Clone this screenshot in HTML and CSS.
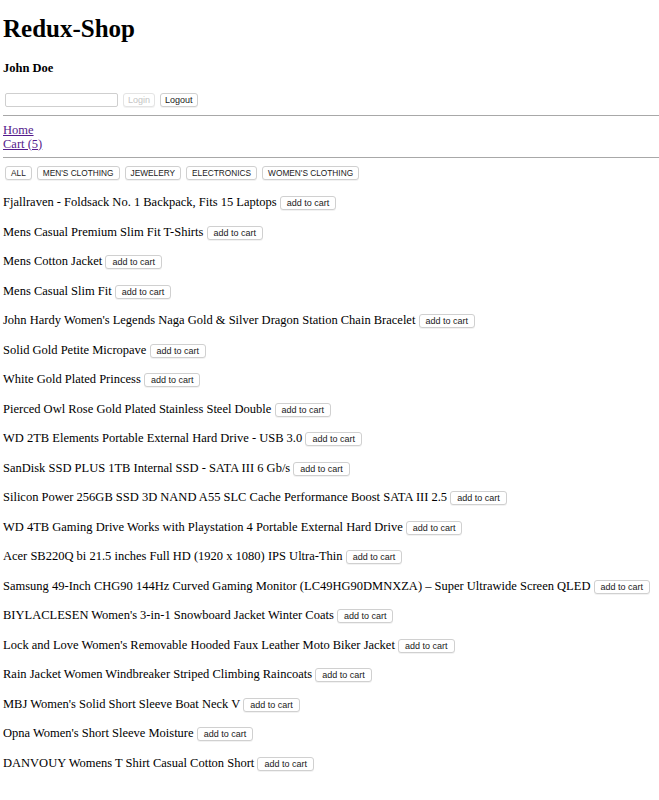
FILE: index.html
```html
<!DOCTYPE html>
<html>
<head>
<meta charset="utf-8">
<link rel="stylesheet" href="styles.css">
</head>
<body>
<h1 class="title">Redux-Shop</h1>
<h3 class="user">John Doe</h3>
<div class="auth">
  <input class="field" type="text">
  <button class="btn abtn btn-disabled" disabled>Login</button>
  <button class="btn abtn">Logout</button>
</div>
<hr class="rule">
<div class="nav">
  <a class="link" href="#">Home</a><br>
  <a class="link" href="#">Cart (5)</a>
</div>
<hr class="rule rule-second">
<div class="filters">
  <button class="btn fbtn">ALL</button>
  <button class="btn fbtn">MEN'S CLOTHING</button>
  <button class="btn fbtn">JEWELERY</button>
  <button class="btn fbtn">ELECTRONICS</button>
  <button class="btn fbtn">WOMEN'S CLOTHING</button>
</div>
<div class="products">
  <p class="item">Fjallraven - Foldsack No. 1 Backpack, Fits 15 Laptops <button class="btn">add to cart</button></p>
  <p class="item">Mens Casual Premium Slim Fit T-Shirts <button class="btn">add to cart</button></p>
  <p class="item">Mens Cotton Jacket <button class="btn">add to cart</button></p>
  <p class="item">Mens Casual Slim Fit <button class="btn">add to cart</button></p>
  <p class="item">John Hardy Women's Legends Naga Gold &amp; Silver Dragon Station Chain Bracelet <button class="btn">add to cart</button></p>
  <p class="item">Solid Gold Petite Micropave <button class="btn">add to cart</button></p>
  <p class="item">White Gold Plated Princess <button class="btn">add to cart</button></p>
  <p class="item">Pierced Owl Rose Gold Plated Stainless Steel Double <button class="btn">add to cart</button></p>
  <p class="item">WD 2TB Elements Portable External Hard Drive - USB 3.0 <button class="btn">add to cart</button></p>
  <p class="item">SanDisk SSD PLUS 1TB Internal SSD - SATA III 6 Gb/s <button class="btn">add to cart</button></p>
  <p class="item">Silicon Power 256GB SSD 3D NAND A55 SLC Cache Performance Boost SATA III 2.5 <button class="btn">add to cart</button></p>
  <p class="item">WD 4TB Gaming Drive Works with Playstation 4 Portable External Hard Drive <button class="btn">add to cart</button></p>
  <p class="item">Acer SB220Q bi 21.5 inches Full HD (1920 x 1080) IPS Ultra-Thin <button class="btn">add to cart</button></p>
  <p class="item">Samsung 49-Inch CHG90 144Hz Curved Gaming Monitor (LC49HG90DMNXZA) – Super Ultrawide Screen QLED <button class="btn">add to cart</button></p>
  <p class="item">BIYLACLESEN Women's 3-in-1 Snowboard Jacket Winter Coats <button class="btn">add to cart</button></p>
  <p class="item">Lock and Love Women's Removable Hooded Faux Leather Moto Biker Jacket <button class="btn">add to cart</button></p>
  <p class="item">Rain Jacket Women Windbreaker Striped Climbing Raincoats <button class="btn">add to cart</button></p>
  <p class="item">MBJ Women's Solid Short Sleeve Boat Neck V <button class="btn">add to cart</button></p>
  <p class="item">Opna Women's Short Sleeve Moisture <button class="btn">add to cart</button></p>
  <p class="item">DANVOUY Womens T Shirt Casual Cotton Short <button class="btn">add to cart</button></p>
</div>
</body>
</html>
```
FILE: styles.css
```css
html, body {
  margin: 0;
  padding: 0;
  background: #fff;
}
body {
  padding-left: 3px;
  font-family: "Liberation Serif", "Times New Roman", serif;
  font-size: 12.5px;
  line-height: 14px;
  color: #000;
}
.title {
  font-size: 25px;
  line-height: 30px;
  font-weight: bold;
  margin: 14px 0 0 0;
}
.user {
  font-size: 12.5px;
  line-height: 16px;
  font-weight: bold;
  margin: 16px 0 0 0;
}
.auth {
  margin-top: 16px;
  padding-left: 2px;
  display: flex;
  align-items: center;
  gap: 5px;
  height: 16px;
}
.field {
  box-sizing: border-box;
  width: 113px;
  height: 14px;
  margin: 0;
  padding: 0 2px;
  border: 1px solid #cfcfcf;
  border-radius: 2px;
  background: #fff;
}
.btn {
  box-sizing: border-box;
  height: 14px;
  margin: 0;
  padding: 0 6px;
  font-family: "Liberation Sans", Arial, sans-serif;
  font-size: 9px;
  line-height: 12px;
  color: #1a1a1a;
  background: #fff;
  border: 1px solid #d0d0d0;
  border-radius: 3px;
  box-shadow: 0 1px 0 rgba(0,0,0,0.05);
  vertical-align: middle;
}
.abtn {
  padding: 0 4px;
}
.btn-disabled {
  color: #c4c4c4;
  border-color: #e4e4e4;
}
.rule {
  margin: 7px 0 0 0;
  border: 0;
  border-top: 1px solid #a8a8a8;
  height: 0;
}
.nav {
  margin-top: 8px;
  line-height: 13.5px;
}
.link {
  color: #551a8b;
  text-decoration: underline;
}
.rule-second {
  margin-top: 6px;
}
.filters {
  margin-top: 8px;
  padding-left: 2px;
  display: flex;
  gap: 5px;
}
.fbtn {
  font-size: 8.3px;
  padding: 0 5px;
}
.products {
  margin-top: 14px;
}
.item {
  margin: 0 0 12.5px 0;
  line-height: 17px;
}
```
